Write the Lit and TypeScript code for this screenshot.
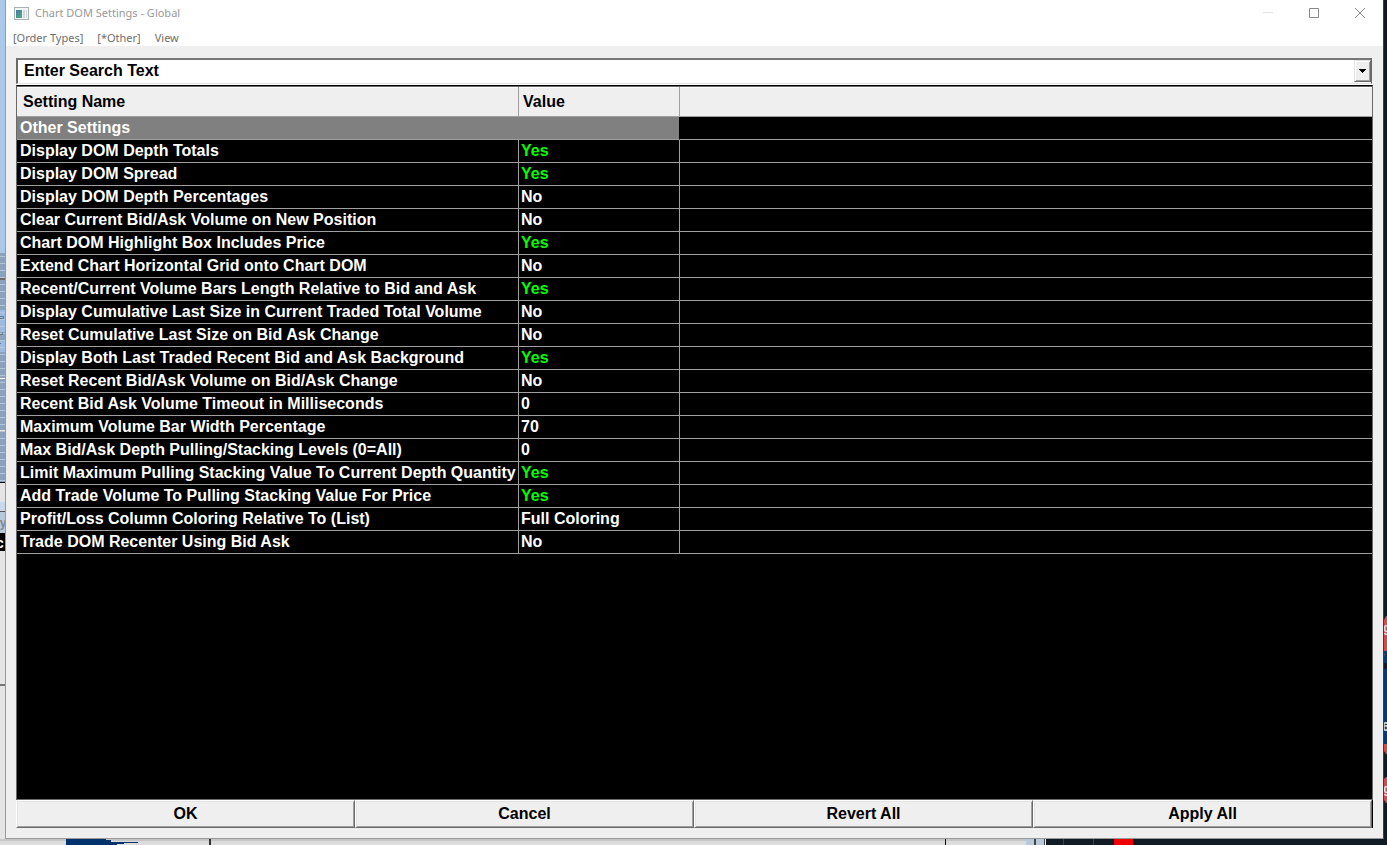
import { LitElement, html, svg, css } from "lit";
import { customElement, state } from "lit/decorators.js";

type Setting = { name: string; value: string };

const SETTINGS: Setting[] = [
  { name: "Display DOM Depth Totals", value: "Yes" },
  { name: "Display DOM Spread", value: "Yes" },
  { name: "Display DOM Depth Percentages", value: "No" },
  { name: "Clear Current Bid/Ask Volume on New Position", value: "No" },
  { name: "Chart DOM Highlight Box Includes Price", value: "Yes" },
  { name: "Extend Chart Horizontal Grid onto Chart DOM", value: "No" },
  { name: "Recent/Current Volume Bars Length Relative to Bid and Ask", value: "Yes" },
  { name: "Display Cumulative Last Size in Current Traded Total Volume", value: "No" },
  { name: "Reset Cumulative Last Size on Bid Ask Change", value: "No" },
  { name: "Display Both Last Traded Recent Bid and Ask Background", value: "Yes" },
  { name: "Reset Recent Bid/Ask Volume on Bid/Ask Change", value: "No" },
  { name: "Recent Bid Ask Volume Timeout in Milliseconds", value: "0" },
  { name: "Maximum Volume Bar Width Percentage", value: "70" },
  { name: "Max Bid/Ask Depth Pulling/Stacking Levels (0=All)", value: "0" },
  { name: "Limit Maximum Pulling Stacking Value To Current Depth Quantity", value: "Yes" },
  { name: "Add Trade Volume To Pulling Stacking Value For Price", value: "Yes" },
  { name: "Profit/Loss Column Coloring Relative To (List)", value: "Full Coloring" },
  { name: "Trade DOM Recenter Using Bid Ask", value: "No" },
];

/** Slivers of the windows lying behind the dialog. */
@customElement("desktop-sliver")
class DesktopSliver extends LitElement {
  static properties = { side: { type: String } };
  declare side: string;

  static styles = css`
    :host { display: block; overflow: hidden; }
    svg { display: block; }
    text { font-family: "Liberation Sans", Arial, sans-serif; }
    .mono { font-family: "Liberation Mono", monospace; }
  `;

  render() {
    if (this.side === "left") {
      const lines = Array.from({ length: 33 }, (_, i) => 256 + i * 7);
      return html`<svg width="5" height="845" aria-hidden="true">
        <rect width="5" height="845" fill="#e4e4e4" />
        <rect width="5" height="253" fill="#abc8ea" />
        <rect y="253" width="5" height="229" fill="#8ba2bd" />
        <rect y="310" width="5" height="22" fill="#9dbbe0" />
        <rect y="340" width="5" height="12" fill="#9dbbe0" />
        ${lines.map((y) => svg`<rect y=${y} width="5" height="1" fill="#b4c6da" />`)}
        <rect y="278" width="5" height="2" fill="#6c6c6c" />
        <path d="M0 316.5h3.500v2H0M0 334.500h2.500v-2M0 343.500h1" fill="none" stroke="#64788f" />
        <rect y="378" width="5" height="1" fill="#fff" />
        <rect y="430" width="5" height="1" fill="#f0e6d8" />
        <rect y="482" width="5" height="1" fill="#000" />
        <rect y="502" width="5" height="9" fill="#c9d8ea" />
        <rect y="511" width="5" height="1" fill="#555" />
        <rect y="512" width="5" height="21" fill="#b9c9dc" />
        <text x="-7" y="527" font-size="12" fill="#7b8794">ay</text>
        <rect y="533" width="5" height="18" fill="#000" />
        <text x="-4" y="548" font-size="14" fill="#fff">c</text>
        <rect y="684" width="5" height="2" fill="#777" />
      </svg>`;
    }
    if (this.side === "right") {
      return html`<svg width="3" height="845" aria-hidden="true">
        <rect width="3" height="845" fill="#101b25" />
        <path d="M2 616h1v35H0v-31z" fill="#d94848" />
        <rect y="651" width="3" height="12" fill="#003a78" />
        <rect y="669" width="3" height="75" fill="#003a78" />
        <path d="M0 744h3v10h-1l-2-3zM2 777h1v26h-1l-2-3v-21z" fill="#d94848" />
        <text class="mono" x="-1" y="632" font-size="12" fill="#ddd">g</text>
        <text class="mono" x="-4" y="656" font-size="12" fill="#ddd">,</text>
        <text class="mono" x="-2" y="731" font-size="12" fill="#ddd">6</text>
        <text class="mono" x="-1" y="793" font-size="12" fill="#ddd">g</text>
      </svg>`;
    }
    return html`<svg width="1387" height="6" aria-hidden="true">
      <rect width="1387" height="6" fill="#dcdcdc" />
      <rect width="1387" height="2" fill="#c6c6c6" />
      <path d="M66 0h40v1h5v2h27v1h-14v1h-7v1H66z" fill="#00336c" />
      <rect x="209" width="2" height="6" fill="#333" />
      <rect x="945" width="1" height="6" fill="#000" />
      <rect x="1026" width="8" height="6" fill="#b9c9dc" />
      <rect x="1034" width="2" height="6" fill="#444" />
      <rect x="1036" width="9" height="6" fill="#b9c9dc" />
      <rect x="1044" width="1" height="6" fill="#444" />
      <rect x="1045" width="1" height="6" fill="#eee" />
      <rect x="1046" width="341" height="6" fill="#101b25" />
      <path d="M1063.5 0v6M1093.5 0v6" stroke="#b01018" />
      <rect x="1114" width="19" height="6" fill="#f00000" />
    </svg>`;
  }
}

@customElement("app-root")
class AppRoot extends LitElement {
  @state() private query = "Enter Search Text";

  static styles = css`
    :host {
      display: grid;
      grid-template-columns: 5px minmax(0, 1fr) 3px;
      grid-template-rows: minmax(0, 1fr) 6px;
      height: 100vh;
      overflow: hidden;
      font: bold 16px/22px "Liberation Sans", Arial, sans-serif;
      color: #000;
    }
    .bottom { grid-column: 1 / -1; }
    .window {
      display: flex;
      flex-direction: column;
      box-sizing: border-box;
      background: #efefef;
      border: 1px solid #999;
      border-top: 0;
      border-right-color: #3a3f45;
    }
    .top {
      background: #fff;
      font: 11px/20px "Noto Sans", "Open Sans", sans-serif;
    }
    .titlebar { display: flex; align-items: center; height: 26px; }
    .app-icon { margin: 0 6px 0 8px; }
    .title { flex: 1; margin: 0; font: inherit; font-size: 12px; color: #999; }
    .caption { width: 46px; height: 26px; padding: 0; border: 0; background: none; display: grid; place-items: center; }
    .menu { display: flex; gap: 14px; height: 20px; padding: 0 7px; }
    .menu button { padding: 0; border: 0; background: none; font: inherit; line-height: 24px; color: #6d6d6d; }
    .title { font-size: 11px; }
    .content {
      flex: 1;
      min-height: 0;
      display: flex;
      flex-direction: column;
      margin: 12px 10px 10px;
    }
    .search {
      display: flex;
      height: 22px;
      margin: 0 1px 1px 0;
      background: #fff;
      border: 2px solid #696969;
      border-top-color: #777;
      border-right-width: 1px;
      border-bottom: 1px solid #e3e3e3;
      padding-bottom: 1px;
      box-shadow: 0 1px #fff;
    }
    .search input { flex: 1; min-width: 0; padding: 0 6px; border: 0; outline: 0; background: none; font: inherit; line-height: 20px; height: 21px; }
    .drop {
      width: 17px;
      padding: 0;
      background: #efefef;
      border: 1px solid #696969;
      border-top-color: #e3e3e3;
      border-left-color: #e3e3e3;
      box-shadow: inset 1px 1px #fff, inset -1px -1px #a0a0a0;
      display: grid;
      place-items: center;
    }
    .list {
      flex: 1;
      min-height: 0;
      overflow: hidden;
      background: #000;
      border: 1px solid #696969;
      border-top-color: #000;
    }
    table { width: 100%; border-collapse: separate; border-spacing: 0; table-layout: fixed; border-top: 1px solid #696969; }
    .c1 { width: 501px; }
    .c2 { width: 161px; }
    th, td { padding: 0; border-bottom: 1px solid #a0a0a0; text-align: left; white-space: nowrap; }
    th + th, td + td { border-left: 1px solid #a0a0a0; }
    thead th { height: 29px; padding: 0 4px 0 6px; background: #efefef; box-shadow: inset 0 1px #fff; }
    thead th + th { padding-left: 4px; }
    tbody { color: #fff; }
    tbody th, td { height: 22px; padding-left: 3px; }
    td + td, tbody th + td { padding-left: 2px; border-left: 1px solid #a0a0a0; }
    tbody .group { background: #808080; }
    tbody .group + td { border-left-color: #000; }
    tbody .yes { color: #00ff00; }
    .buttons { display: grid; grid-template-columns: repeat(4, 1fr); border-right: 1px solid #000; }
    .buttons button {
      height: 28px;
      padding: 0;
      font: inherit;
      color: #000;
      background: #efefef;
      border: 1px solid #696969;
      border-top-color: #fff;
      border-left-color: #fff;
      box-shadow: inset 1px 1px #e3e3e3, inset -1px -1px #a0a0a0;
    }
  `;

  render() {
    return html`
      <desktop-sliver side="left"></desktop-sliver>
      <main class="window">
        <header class="top">
          <div class="titlebar">
            <svg class="app-icon" width="15" height="13" viewBox="0 0 15 13" aria-hidden="true">
              <defs>
                <linearGradient id="pane" x1="0" y1="0" x2="1" y2="1">
                  <stop offset="0" stop-color="#4a78a8" /><stop offset="1" stop-color="#4fae78" />
                </linearGradient>
              </defs>
              <rect x="0.5" y="0.5" width="14" height="12" fill="#f4f6f8" stroke="#a9b0b6" />
              <rect x="2" y="3" width="6" height="8" fill="url(#pane)" />
              <rect x="9" y="3" width="2" height="8" fill="#cfd8dc" />
              <rect x="12" y="3" width="1" height="8" fill="#cfd8dc" />
            </svg>
            <h1 class="title">Chart DOM Settings - Global</h1>
            <button class="caption" aria-label="Minimize" disabled>
              <svg width="10" height="10"><path d="M0 4.5h10" stroke="#e3e3e3" /></svg>
            </button>
            <button class="caption" aria-label="Maximize">
              <svg width="10" height="10"><path d="M.5.5h9v9h-9z" fill="none" stroke="#888" /></svg>
            </button>
            <button class="caption" aria-label="Close">
              <svg width="10" height="10"><path d="M0 0l10 10M10 0L0 10" stroke="#888" /></svg>
            </button>
          </div>
          <nav class="menu">
            <button>[Order Types]</button><button>[*Other]</button><button>View</button>
          </nav>
        </header>
        <div class="content">
          <div class="search">
            <input aria-label="Search settings" .value=${this.query}
              @input=${(e: Event) => (this.query = (e.target as HTMLInputElement).value)} />
            <button class="drop" aria-label="Show search history">
              <svg width="7" height="4"><path d="M0 0h7v1H6v1H5v1H4v1H3V3H2V2H1V1H0z" /></svg>
            </button>
          </div>
          <div class="list">
            <table>
              <colgroup><col class="c1" /><col class="c2" /><col /></colgroup>
              <thead>
                <tr><th scope="col">Setting Name</th><th scope="col">Value</th><th></th></tr>
              </thead>
              <tbody>
                <tr><th class="group" colspan="2">Other Settings</th><td></td></tr>
                ${SETTINGS.map((s) => html`<tr>
                  <th scope="row">${s.name}</th>
                  <td class=${s.value === "Yes" ? "yes" : ""}>${s.value}</td>
                  <td></td>
                </tr>`)}
              </tbody>
            </table>
          </div>
          <div class="buttons">
            <button>OK</button><button>Cancel</button><button>Revert All</button><button>Apply All</button>
          </div>
        </div>
      </main>
      <desktop-sliver side="right"></desktop-sliver>
      <desktop-sliver class="bottom" side="bottom"></desktop-sliver>
    `;
  }
}
